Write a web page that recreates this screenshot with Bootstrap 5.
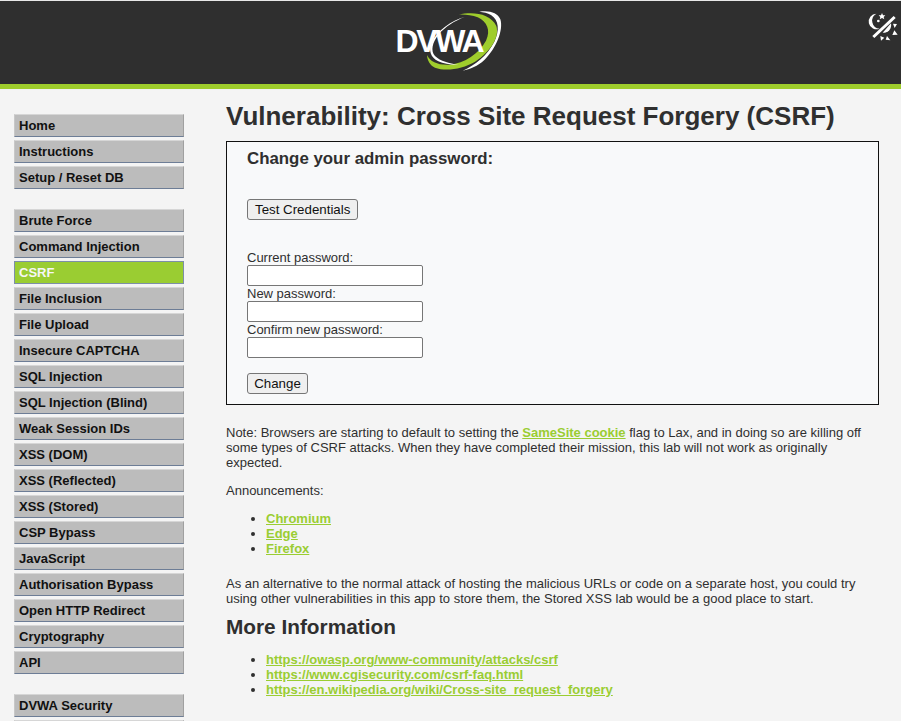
<!DOCTYPE html>
<html lang="en">
<head>
    <meta charset="UTF-8">
    <meta name="viewport" content="width=device-width, initial-scale=1.0">
    <title>Vulnerability: Cross Site Request Forgery (CSRF)</title>

    <link href="https://cdn.jsdelivr.net/npm/bootstrap@5.3.0/dist/css/bootstrap.min.css" rel="stylesheet">
    <style>
        body { background: #f4f4f4; color: #2f2f2f; font-family: "Liberation Sans", Arial, sans-serif; font-size: 13px; line-height: 15px; overflow: hidden; height: 721px; }
        .dv-header { height: 89px; background: #2f2f2f; border-top: 1px solid #e8e8e8; border-bottom: 5px solid #9fcd2c; position: relative; }
        .dv-logo { width: 200px; height: 83px; position: relative; }
        .dv-logo-text { position: absolute; left: 45px; top: 24px; font-size: 32px; line-height: 32px; font-weight: 700; color: #fff; letter-spacing: -2.3px; }
        .dv-logo svg { position: absolute; left: 0; top: 0; }
        .dv-theme { position: absolute; right: 0; top: -1px; }
        .dv-row { height: 632px; overflow: hidden; }
        .dv-side { width: 226px; padding: 25px 0 0 14px; flex: none; }
        .dv-menu { width: 170px; margin-bottom: 20px; }
        .dv-menu a { display: block; height: 23px; margin-bottom: 3px; padding: 3px 4px; background: #bcbcbc; border-top: 1px solid #d6d6d6; border-bottom: 1px solid #6d7d96; border-left: 1px solid #c8c8c8; border-right: 1px solid #a0a0a0; color: #111; font-weight: 700; font-size: 13px; line-height: 16px; text-decoration: none; white-space: nowrap; }
        .dv-menu a.dv-on { background: #9acd32; color: #f6f6f6; border: 1px solid #7d8fa8; }
        .dv-main { width: 653px; padding-top: 12px; }
        .dv-main h1 { font-size: 26px; font-weight: 700; line-height: 30px; margin: 0 0 10px; color: #2f2f2f; }
        .dv-main h2 { font-size: 20.8px; font-weight: 700; line-height: 24px; margin: 0 0 13px; color: #2f2f2f; }
        .dv-box { background: #f8f9fa; border: 1px solid #111; height: 264px; padding: 7px 20px; margin-bottom: 20px; }
        .dv-box h3 { font-size: 16.85px; font-weight: 700; line-height: 20px; margin: 0 0 30px; color: #2f2f2f; }
        .dv-btn { display: block; height: 21px; padding: 0 7px; font-size: 13.3px; line-height: 17px; color: #111; background: #efefef; border: 1px solid #767676; border-radius: 3px; font-family: inherit; }
        .dv-creds { margin-bottom: 30px; }
        .dv-change { width: 61px; padding: 0; margin-top: 15px; }
        .dv-box label { display: block; line-height: 15px; }
        .dv-box input { display: block; width: 176px; height: 21px; background: #fff; border: 1px solid #767676; border-radius: 2px; padding: 0 2px; }
        .dv-main p { margin: 0 0 13px; line-height: 15px; }
        .dv-main ul { margin: 0 0 20px; padding-left: 40px; line-height: 15px; }
        .dv-main p.dv-last { margin-bottom: 9px; }
        .dv-main a.dv-lnk { color: #9acd32; font-weight: 700; text-decoration: underline; }
    </style>
    <script src="https://cdn.jsdelivr.net/npm/bootstrap@5.3.0/dist/js/bootstrap.bundle.min.js"></script>
</head>
<body>
    <div class="dv-header d-flex justify-content-center">
        <div class="dv-logo">
            <svg width="200" height="84" viewBox="0 3 600 252">
                <!-- white outer swoosh -->
                <path d="M385 35 C415 30 440 38 448 58 C458 90 436 145 400 180 C380 198 358 208 335 212 C372 196 410 165 430 125 C446 92 444 60 420 45 C410 39 398 36 385 35 Z" fill="#fff"/>
                <!-- green ring -->
                <path d="M323 44 C365 34 418 40 436 78 C446 110 420 155 372 185 C335 207 285 215 252 203 C238 197 229 183 228 165 C238 186 262 196 296 194 C340 190 385 160 405 122 C420 92 408 64 380 52 C362 45 342 43 323 44 Z" fill="#9fcd2c"/>
                <!-- thin white inner line -->
                <path d="M342 50 C300 62 258 92 242 128 C232 150 238 172 262 184 C278 191 300 195 322 194 C295 190 268 184 252 168 C238 152 244 128 262 104 C282 80 312 62 342 50 Z" fill="#fff"/>
            </svg>
            <span class="dv-logo-text">DVWA</span>
        </div>
        <svg class="dv-theme" width="60" height="60" viewBox="0 0 180 180">
            <path d="M106 41 A23.5 23.5 0 1 0 116 86 A24 24 0 0 1 106 41 Z" fill="#fff"/>
            <path d="M123 39 L126 46 L133 46 L128 51 L130 58 L123 54 L116 58 L118 51 L113 46 L120 46 Z" fill="#fff"/>
            <circle cx="112" cy="63" r="4" fill="#fff"/>
            <path d="M97 111 L161 51" stroke="#fff" stroke-width="9"/>
            <path d="M150 70 A23 23 0 0 1 125 98 Z" fill="#fff"/>
            <path d="M156 71 L168 72 L161 84 Z M160 91 L170 104 L154 105 Z M138 108 L148 121 L134 119 Z M118 108 L130 113 L120 122 Z" fill="#fff"/>
        </svg>
    </div>

    <div class="d-flex dv-row">
        <div class="dv-side">
            <div class="dv-menu">
                <a href="#">Home</a>
                <a href="#">Instructions</a>
                <a href="#">Setup / Reset DB</a>
            </div>
            <div class="dv-menu">
                <a href="#">Brute Force</a>
                <a href="#">Command Injection</a>
                <a href="#" class="dv-on">CSRF</a>
                <a href="#">File Inclusion</a>
                <a href="#">File Upload</a>
                <a href="#">Insecure CAPTCHA</a>
                <a href="#">SQL Injection</a>
                <a href="#">SQL Injection (Blind)</a>
                <a href="#">Weak Session IDs</a>
                <a href="#">XSS (DOM)</a>
                <a href="#">XSS (Reflected)</a>
                <a href="#">XSS (Stored)</a>
                <a href="#">CSP Bypass</a>
                <a href="#">JavaScript</a>
                <a href="#">Authorisation Bypass</a>
                <a href="#">Open HTTP Redirect</a>
                <a href="#">Cryptography</a>
                <a href="#">API</a>
            </div>
            <div class="dv-menu">
                <a href="#">DVWA Security</a>
                <a href="#" aria-label="PHP Info"></a>
            </div>
        </div>

        <div class="dv-main">
            <h1>Vulnerability: Cross Site Request Forgery (CSRF)</h1>
            <div class="dv-box">
                <h3>Change your admin password:</h3>
                <button class="dv-btn dv-creds" type="button">Test Credentials</button>
                <div>
                    <label>Current password:</label>
                    <input type="password">
                    <label>New password:</label>
                    <input type="password">
                    <label>Confirm new password:</label>
                    <input type="password">
                </div>
                <button class="dv-btn dv-change" type="button">Change</button>
            </div>
            <p>Note: Browsers are starting to default to setting the <a class="dv-lnk" href="#">SameSite cookie</a> flag to Lax, and in doing so are killing off some types of CSRF attacks. When they have completed their mission, this lab will not work as originally expected.</p>
            <p>Announcements:</p>
            <ul>
                <li><a class="dv-lnk" href="#">Chromium</a></li>
                <li><a class="dv-lnk" href="#">Edge</a></li>
                <li><a class="dv-lnk" href="#">Firefox</a></li>
            </ul>
            <p class="dv-last">As an alternative to the normal attack of hosting the malicious URLs or code on a separate host, you could try using other vulnerabilities in this app to store them, the Stored XSS lab would be a good place to start.</p>
            <h2>More Information</h2>
            <ul>
                <li><a class="dv-lnk" href="#">https://owasp.org/www-community/attacks/csrf</a></li>
                <li><a class="dv-lnk" href="#">https://www.cgisecurity.com/csrf-faq.html</a></li>
                <li><a class="dv-lnk" href="#">https://en.wikipedia.org/wiki/Cross-site_request_forgery</a></li>
            </ul>
        </div>
    </div>
</body>
</html>
